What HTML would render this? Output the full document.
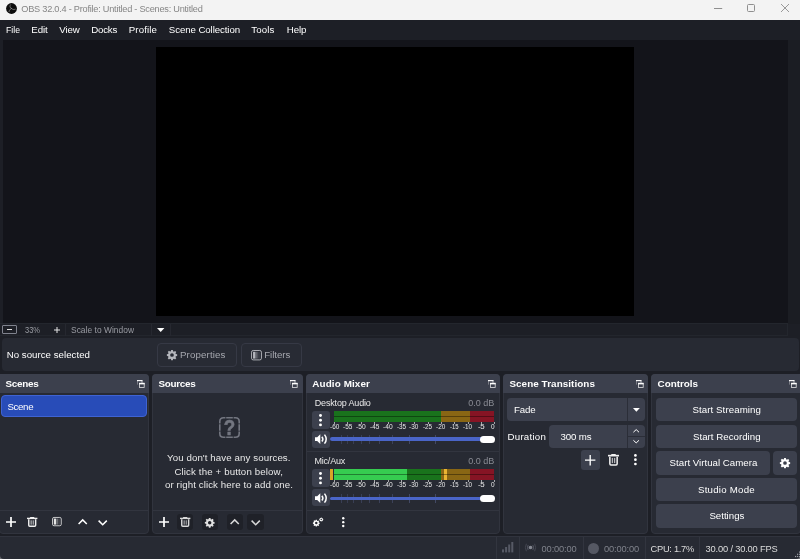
<!DOCTYPE html>
<html><head><meta charset="utf-8"><title>OBS 32.0.4 - Profile: Untitled - Scenes: Untitled</title>
<style>
*{margin:0;padding:0;box-sizing:border-box}
html,body{width:800px;height:559px;overflow:hidden;background:#1d1f26;font-family:"Liberation Sans","DejaVu Sans",sans-serif;}
.a{position:absolute}
.t{position:absolute;white-space:nowrap;color:#fff;font-size:9.7px;line-height:12px}
.dock{position:absolute;background:#272a33;border:1px solid #31343e;border-radius:4px}
.hd{position:absolute;background:#3c404d;height:19px;border-radius:4px 4px 0 0}
.btn{position:absolute;background:#3c404d;border-radius:4px}
.dbtn{position:absolute;background:#1f2128;border-radius:3px}
.ln{position:absolute;background:#32353f;height:1px}
.vl{position:absolute;background:#32353f;width:1px}
svg{position:absolute;overflow:visible}
</style></head><body>
<!-- ===== title bar ===== -->
<div class="a" style="left:0;top:0;width:800px;height:20px;background:#f3f3f3"></div>
<svg style="left:5.5px;top:2.7px" width="11" height="11" viewBox="0 0 22 22"><circle cx="11" cy="11" r="10.8" fill="#0d0d0d"/><g fill="none" stroke="#9a9a9a" stroke-width="1.3" stroke-linecap="round"><path d="M9 3.5C6.5 6.5 8 10 11 11"/><path d="M18.5 12.5C15 14 11.5 12.5 11 11"/><path d="M6 17.5C6.5 13.5 9 11.5 11 11"/></g></svg>
<svg style="left:713.7px;top:7.8px" width="9" height="1"><rect width="8.2" height="1" fill="#8f8f8f"/></svg>
<div class="a" style="left:747px;top:4px;width:8.3px;height:8.3px;border:1px solid #8f8f8f;border-radius:1.5px"></div>
<svg style="left:781px;top:4px" width="8" height="8" viewBox="0 0 8 8"><path d="M0 0L8 8M8 0L0 8" stroke="#8f8f8f" stroke-width="0.9"/></svg>

<!-- ===== preview ===== -->
<div class="a" style="left:0;top:39.5px;width:800px;height:284px;background:#13141a"></div>
<div class="a" style="left:0;top:39.5px;width:2.5px;height:284px;background:#1d1f26"></div>
<div class="a" style="left:787.5px;top:39.5px;width:12.5px;height:284px;background:#1b1d23"></div>
<div class="a" style="left:155.6px;top:46.8px;width:478.6px;height:269.2px;background:#000"></div>

<!-- ===== zoom bar ===== -->
<div class="a" style="left:0;top:323.5px;width:800px;height:15.5px;background:#1d1f26"></div>
<div class="a" style="left:-1px;top:323.3px;width:788.5px;height:12.6px;background:#1d1f26;border:1px solid #23262d"></div>
<div class="a" style="left:1.9px;top:324.8px;width:15px;height:9.2px;border:0.9px solid #80838e;border-radius:1px"></div>
<div class="a" style="left:6.6px;top:328.9px;width:5.6px;height:1.1px;background:#e0e0e0"></div>
<svg style="left:54px;top:327px" width="6" height="6" viewBox="0 0 6 6"><path d="M3 0V6M0 3H6" stroke="#e6e6e6" stroke-width="1"/></svg>
<div class="vl" style="left:65px;top:324px;height:12px;background:#262830"></div>
<div class="vl" style="left:151px;top:324px;height:12px;background:#262830"></div>
<div class="vl" style="left:170px;top:324px;height:12px;background:#262830"></div>
<svg style="left:156.8px;top:328.1px" width="8" height="4" viewBox="0 0 8 4"><path d="M0 0H7.4L3.7 4Z" fill="#fff"/></svg>

<!-- ===== context bar ===== -->
<div class="a" style="left:1.9px;top:338.3px;width:796.9px;height:32.4px;background:#272a33;border-radius:4px"></div>
<div class="a" style="left:157px;top:343px;width:79.5px;height:23.7px;border:1px solid #363945;border-radius:4px;background:#282b34"></div>
<div class="a" style="left:241.4px;top:343px;width:60.3px;height:23.7px;border:1px solid #363945;border-radius:4px;background:#282b34"></div>
<svg class="gear" style="left:167px;top:350px" width="10" height="10" viewBox="0 0 20 20"><use href="#gear" fill="#b4b6bc"/></svg>
<svg style="left:250.7px;top:349.8px" width="11" height="10.4" viewBox="0 0 22 21"><use href="#filt" color="#b4b6bc"/></svg>

<!-- ===== icon defs ===== -->
<svg width="0" height="0" style="left:-10px;top:-10px"><defs>
<path id="gear" fill-rule="evenodd" d="M8.3 0h3.4l.5 2.6 1.7.7 2.2-1.5 2.4 2.4-1.5 2.2.7 1.7 2.6.5v3.4l-2.6.5-.7 1.7 1.5 2.2-2.4 2.4-2.2-1.5-1.7.7-.5 2.6H8.300000000000001l-.5-2.6-1.7-.7-2.2 1.5-2.4-2.4 1.5-2.2-.7-1.7L-.3 11.700000000000001V8.3l2.6-.5.7-1.7L1.5 3.9l2.4-2.4 2.2 1.5 1.7-.7zM10 6.300000000000001a3.7 3.7 0 100 7.4 3.7 3.7 0 000-7.4z"/>
<g id="filt"><rect x="1" y="1" width="20" height="19" rx="3.4" fill="none" stroke="currentColor" stroke-width="1.9"/><rect x="4" y="3.6" width="5" height="13.8" fill="currentColor"/><rect x="9.6" y="3.6" width="3.6" height="13.8" fill="currentColor" opacity=".42"/><rect x="13.2" y="3.6" width="4.6" height="13.8" fill="currentColor" opacity=".14"/></g>
<g id="float"><rect x="0" y="0" width="5.4" height="1.2" fill="#fff" opacity=".95"/><rect x="0" y="0" width="0.8" height="4.6" fill="#fff" opacity=".4"/><rect x="4.6" y="0" width="0.8" height="2.9" fill="#fff" opacity=".8"/><rect x="2" y="2.85" width="5.6" height="1.5" fill="#fff"/><rect x="2.4" y="3.3" width="4.8" height="4.2" fill="none" stroke="#fff" stroke-width="0.8" opacity=".85"/></g>
<g id="plus"><path d="M5 0V10M0 5H10" stroke="#fff" stroke-width="1.7" fill="none"/></g>
<g id="trash"><rect x="0" y="0.7" width="10.4" height="1.4" fill="currentColor"/><rect x="3.1" y="0" width="4.2" height="1.2" fill="currentColor"/><path d="M1.75 2.3V8.3Q1.75 9.3 2.75 9.3H7.65Q8.65 9.3 8.65 8.3V2.3" fill="none" stroke="currentColor" stroke-width="1.45"/><rect x="3.55" y="3.3" width="1.2" height="4.4" fill="currentColor" opacity=".7"/><rect x="5.65" y="3.3" width="1.2" height="4.4" fill="currentColor" opacity=".7"/></g>
<g id="up"><path d="M0.6 5L4.7 0.9L8.8 5" fill="none" stroke="currentColor" stroke-width="1.5"/></g>
<g id="down"><path d="M0.6 0.6L4.7 4.7L8.8 0.6" fill="none" stroke="currentColor" stroke-width="1.5"/></g>
<g id="dots"><circle cx="1.5" cy="1.5" r="1.45" fill="#fff"/><circle cx="1.5" cy="6.2" r="1.45" fill="#fff"/><circle cx="1.5" cy="10.9" r="1.45" fill="#fff"/></g>
<g id="spk"><path d="M0 3.3H2.2L5.3 0.2V10L2.2 6.9H0Z" fill="#fff"/><path d="M6.9 2.7Q8.9 5.1 6.9 7.5" fill="none" stroke="#fff" stroke-width="1.5"/><path d="M9.5 0.6Q13 5.1 9.5 9.6" fill="none" stroke="#fff" stroke-width="1.5"/></g>
</defs></svg>

<!-- ===== Scenes dock ===== -->
<div class="dock" style="left:-1px;top:374px;width:150px;height:159.6px"></div>
<div class="hd" style="left:0;top:374px;width:149px;border-radius:0 4px 0 0"></div>
<svg style="left:136.7px;top:379.9px" width="8" height="8" viewBox="0 0 8 8"><use href="#float"/></svg>
<div class="a" style="left:1px;top:394.6px;width:146px;height:22.6px;background:#284cb8;border:1px solid #3f63d2;border-radius:4px"></div>
<div class="ln" style="left:0;top:510px;width:148px"></div>
<svg style="left:6px;top:517.2px" width="10" height="10" viewBox="0 0 10 10"><use href="#plus"/></svg>
<svg style="left:26.8px;top:516.9px;color:#f0f0f0" width="10.4" height="9.8" viewBox="0 0 10.4 9.8"><use href="#trash"/></svg>
<svg style="left:51.9px;top:517.2px" width="9.8" height="9.2" viewBox="0 0 22 21"><use href="#filt" color="#e4e4e4"/></svg>
<svg style="left:77.6px;top:519.3px;color:#fff" width="9.4" height="5.6" viewBox="0 0 9.4 5.6"><use href="#up"/></svg>
<svg style="left:98px;top:519.6px;color:#fff" width="9.4" height="5.6" viewBox="0 0 9.4 5.6"><use href="#down"/></svg>

<!-- ===== Sources dock ===== -->
<div class="dock" style="left:152px;top:374px;width:151px;height:159.6px"></div>
<div class="hd" style="left:152px;top:374px;width:151px"></div>
<svg style="left:290.2px;top:379.9px" width="8" height="8" viewBox="0 0 8 8"><use href="#float"/></svg>
<svg style="left:218.8px;top:416.9px;will-change:transform" width="21" height="21" viewBox="0 0 21 21"><g fill="none" stroke="#737680" stroke-width="1.6"><path d="M0.8 6.4V4.6Q0.8 0.8 4.6 0.8H6.4"/><path d="M14.6 0.8H16.4Q20.2 0.8 20.2 4.6V6.4"/><path d="M20.2 14.6V16.4Q20.2 20.2 16.4 20.2H14.6"/><path d="M6.4 20.2H4.6Q0.8 20.2 0.8 16.4V14.6"/><path d="M7.2 0.8H13.8M7.2 20.2H13.8M0.8 7.2V13.8M20.2 7.2V13.8"/></g><text transform="translate(10.5,17.7) scale(0.94,1.09)" x="0" y="0" text-anchor="middle" font-family="Liberation Sans, sans-serif" font-weight="bold" font-size="20" fill="#737680" stroke="#737680" stroke-width="0.5">?</text></svg>
<div class="ln" style="left:153px;top:510px;width:149px"></div>
<svg style="left:159.4px;top:517.2px" width="10" height="10" viewBox="0 0 10 10"><use href="#plus"/></svg>
<div class="dbtn" style="left:176.6px;top:514px;width:16.6px;height:16.4px"></div>
<svg style="left:180px;top:517.4px;color:#d8d8d8" width="10.4" height="9.8" viewBox="0 0 10.4 9.8"><use href="#trash"/></svg>
<div class="dbtn" style="left:201.6px;top:514px;width:16.8px;height:16.4px"></div>
<svg style="left:205.3px;top:517.5px" width="9.4" height="9.4" viewBox="0 0 20 20"><use href="#gear" fill="#e0e0e0"/></svg>
<div class="dbtn" style="left:227px;top:514px;width:16.4px;height:16.4px"></div>
<svg style="left:230.4px;top:519.3px;color:#d8d8d8" width="9.4" height="5.6" viewBox="0 0 9.4 5.6"><use href="#up"/></svg>
<div class="dbtn" style="left:247.4px;top:514px;width:16.6px;height:16.4px"></div>
<svg style="left:250.9px;top:519.6px;color:#d8d8d8" width="9.4" height="5.6" viewBox="0 0 9.4 5.6"><use href="#down"/></svg>

<!-- ===== Audio Mixer dock ===== -->
<div class="dock" style="left:306px;top:374px;width:194.2px;height:159.6px"></div>
<div class="hd" style="left:306px;top:374px;width:194.2px"></div>
<svg style="left:487.7px;top:379.9px" width="8" height="8" viewBox="0 0 8 8"><use href="#float"/></svg>
<div class="a" style="left:334.0px;top:410.8px;width:106.9px;height:5.5px;background:#19731c"></div>
<div class="a" style="left:440.9px;top:410.8px;width:29.4px;height:5.5px;background:#896614"></div>
<div class="a" style="left:470.3px;top:410.8px;width:24.1px;height:5.5px;background:#861424"></div>
<div class="a" style="left:334.0px;top:416.3px;width:106.9px;height:5.5px;background:#19731c"></div>
<div class="a" style="left:440.9px;top:416.3px;width:29.4px;height:5.5px;background:#896614"></div>
<div class="a" style="left:470.3px;top:416.3px;width:24.1px;height:5.5px;background:#861424"></div>
<div class="a" style="left:334.0px;top:415.8px;width:160.4px;height:0.9px;background:#000;opacity:.38"></div>
<div class="a" style="left:334.0px;top:469.0px;width:106.9px;height:5.5px;background:#19731c"></div>
<div class="a" style="left:440.9px;top:469.0px;width:29.4px;height:5.5px;background:#896614"></div>
<div class="a" style="left:470.3px;top:469.0px;width:24.1px;height:5.5px;background:#861424"></div>
<div class="a" style="left:334.0px;top:469.0px;width:72.8px;height:5.5px;background:#36cc50"></div>
<div class="a" style="left:443.8px;top:469.0px;width:3.0px;height:5.5px;background:#eab432"></div>
<div class="a" style="left:334.0px;top:474.5px;width:106.9px;height:5.5px;background:#19731c"></div>
<div class="a" style="left:440.9px;top:474.5px;width:29.4px;height:5.5px;background:#896614"></div>
<div class="a" style="left:470.3px;top:474.5px;width:24.1px;height:5.5px;background:#861424"></div>
<div class="a" style="left:334.0px;top:474.5px;width:72.8px;height:5.5px;background:#36cc50"></div>
<div class="a" style="left:443.8px;top:474.5px;width:3.0px;height:5.5px;background:#eab432"></div>
<div class="a" style="left:334.0px;top:474.0px;width:160.4px;height:0.9px;background:#000;opacity:.38"></div>
<div class="a" style="left:330px;top:469.0px;width:3.2px;height:11px;background:#d8a428"></div>
<div class="a" style="left:334.0px;top:421.9px;width:1px;height:2.3px;background:#fff;opacity:.6"></div>
<div class="a" style="left:347.4px;top:421.9px;width:1px;height:2.3px;background:#fff;opacity:.6"></div>
<div class="a" style="left:360.7px;top:421.9px;width:1px;height:2.3px;background:#fff;opacity:.6"></div>
<div class="a" style="left:374.1px;top:421.9px;width:1px;height:2.3px;background:#fff;opacity:.6"></div>
<div class="a" style="left:387.5px;top:421.9px;width:1px;height:2.3px;background:#fff;opacity:.6"></div>
<div class="a" style="left:400.8px;top:421.9px;width:1px;height:2.3px;background:#fff;opacity:.6"></div>
<div class="a" style="left:414.2px;top:421.9px;width:1px;height:2.3px;background:#fff;opacity:.6"></div>
<div class="a" style="left:427.6px;top:421.9px;width:1px;height:2.3px;background:#fff;opacity:.6"></div>
<div class="a" style="left:440.9px;top:421.9px;width:1px;height:2.3px;background:#fff;opacity:.6"></div>
<div class="a" style="left:454.3px;top:421.9px;width:1px;height:2.3px;background:#fff;opacity:.6"></div>
<div class="a" style="left:467.7px;top:421.9px;width:1px;height:2.3px;background:#fff;opacity:.6"></div>
<div class="a" style="left:481.0px;top:421.9px;width:1px;height:2.3px;background:#fff;opacity:.6"></div>
<div class="a" style="left:493.8px;top:421.9px;width:1px;height:2.3px;background:#fff;opacity:.6"></div>
<div class="a" style="left:334.0px;top:480.1px;width:1px;height:2.3px;background:#fff;opacity:.6"></div>
<div class="a" style="left:347.4px;top:480.1px;width:1px;height:2.3px;background:#fff;opacity:.6"></div>
<div class="a" style="left:360.7px;top:480.1px;width:1px;height:2.3px;background:#fff;opacity:.6"></div>
<div class="a" style="left:374.1px;top:480.1px;width:1px;height:2.3px;background:#fff;opacity:.6"></div>
<div class="a" style="left:387.5px;top:480.1px;width:1px;height:2.3px;background:#fff;opacity:.6"></div>
<div class="a" style="left:400.8px;top:480.1px;width:1px;height:2.3px;background:#fff;opacity:.6"></div>
<div class="a" style="left:414.2px;top:480.1px;width:1px;height:2.3px;background:#fff;opacity:.6"></div>
<div class="a" style="left:427.6px;top:480.1px;width:1px;height:2.3px;background:#fff;opacity:.6"></div>
<div class="a" style="left:440.9px;top:480.1px;width:1px;height:2.3px;background:#fff;opacity:.6"></div>
<div class="a" style="left:454.3px;top:480.1px;width:1px;height:2.3px;background:#fff;opacity:.6"></div>
<div class="a" style="left:467.7px;top:480.1px;width:1px;height:2.3px;background:#fff;opacity:.6"></div>
<div class="a" style="left:481.0px;top:480.1px;width:1px;height:2.3px;background:#fff;opacity:.6"></div>
<div class="a" style="left:493.8px;top:480.1px;width:1px;height:2.3px;background:#fff;opacity:.6"></div>
<div class="btn" style="left:312.3px;top:411.4px;width:17.4px;height:17.2px;border-radius:3px"></div>
<svg style="left:319.2px;top:414.1px" width="3" height="12.4" viewBox="0 0 3 12.4"><use href="#dots"/></svg>
<div class="btn" style="left:312.3px;top:430.5px;width:17.4px;height:17.2px;border-radius:3px"></div>
<svg style="left:314.9px;top:434.0px" width="12.4" height="10.2" viewBox="0 0 12.4 10.2"><use href="#spk"/></svg>
<div class="btn" style="left:312.3px;top:469.4px;width:17.4px;height:17.2px;border-radius:3px"></div>
<svg style="left:319.2px;top:472.1px" width="3" height="12.4" viewBox="0 0 3 12.4"><use href="#dots"/></svg>
<div class="btn" style="left:312.3px;top:489.0px;width:17.4px;height:17.2px;border-radius:3px"></div>
<svg style="left:314.9px;top:492.5px" width="12.4" height="10.2" viewBox="0 0 12.4 10.2"><use href="#spk"/></svg>
<div class="a" style="left:340.5px;top:434.7px;width:1px;height:9px;background:#5d6797;opacity:0.35"></div>
<div class="a" style="left:347.0px;top:434.7px;width:1px;height:9px;background:#5d6797;opacity:0.3"></div>
<div class="a" style="left:352.5px;top:434.7px;width:1px;height:9px;background:#5d6797;opacity:0.35"></div>
<div class="a" style="left:360.5px;top:434.7px;width:1px;height:9px;background:#5d6797;opacity:0.35"></div>
<div class="a" style="left:368.5px;top:434.7px;width:1px;height:9px;background:#5d6797;opacity:0.35"></div>
<div class="a" style="left:378.9px;top:434.7px;width:1px;height:9px;background:#5d6797;opacity:0.4"></div>
<div class="a" style="left:392.1px;top:434.7px;width:1px;height:9px;background:#5d6797;opacity:0.4"></div>
<div class="a" style="left:409.2px;top:434.7px;width:1px;height:9px;background:#5d6797;opacity:0.5"></div>
<div class="a" style="left:435.2px;top:434.7px;width:1px;height:9px;background:#5d6797;opacity:0.5"></div>
<div class="a" style="left:330.4px;top:437.4px;width:160px;height:3.6px;background:#4a65c8;border-radius:2px"></div>
<div class="a" style="left:479.7px;top:435.5px;width:15px;height:7.4px;background:#fff;border-radius:3.5px"></div>
<div class="a" style="left:340.5px;top:493.8px;width:1px;height:9px;background:#5d6797;opacity:0.35"></div>
<div class="a" style="left:347.0px;top:493.8px;width:1px;height:9px;background:#5d6797;opacity:0.3"></div>
<div class="a" style="left:352.5px;top:493.8px;width:1px;height:9px;background:#5d6797;opacity:0.35"></div>
<div class="a" style="left:360.5px;top:493.8px;width:1px;height:9px;background:#5d6797;opacity:0.35"></div>
<div class="a" style="left:368.5px;top:493.8px;width:1px;height:9px;background:#5d6797;opacity:0.35"></div>
<div class="a" style="left:378.9px;top:493.8px;width:1px;height:9px;background:#5d6797;opacity:0.4"></div>
<div class="a" style="left:392.1px;top:493.8px;width:1px;height:9px;background:#5d6797;opacity:0.4"></div>
<div class="a" style="left:409.2px;top:493.8px;width:1px;height:9px;background:#5d6797;opacity:0.5"></div>
<div class="a" style="left:435.2px;top:493.8px;width:1px;height:9px;background:#5d6797;opacity:0.5"></div>
<div class="a" style="left:330.4px;top:496.5px;width:160px;height:3.6px;background:#4a65c8;border-radius:2px"></div>
<div class="a" style="left:479.7px;top:494.6px;width:15px;height:7.4px;background:#fff;border-radius:3.5px"></div>
<div class="ln" style="left:307px;top:451px;width:192px"></div>
<div class="ln" style="left:307px;top:509.6px;width:192px"></div>
<svg style="left:312.8px;top:517.4px" width="10.4" height="9.4" viewBox="0 0 20.8 18.8"><g transform="translate(0,5.6) scale(0.66)"><use href="#gear" fill="#fff"/></g><g transform="translate(12.6,1.2) scale(0.39)"><use href="#gear" fill="#fff"/></g></svg>
<svg style="left:341.75px;top:516.85px" width="2.5" height="10.3" viewBox="0 0 3 12.4" preserveAspectRatio="none"><use href="#dots"/></svg>

<!-- ===== Scene Transitions dock ===== -->
<div class="dock" style="left:503.3px;top:374px;width:144.9px;height:159.6px"></div>
<div class="hd" style="left:503.3px;top:374px;width:144.9px"></div>
<svg style="left:635.8px;top:379.9px" width="8" height="8" viewBox="0 0 8 8"><use href="#float"/></svg>
<div class="btn" style="left:507px;top:398px;width:138px;height:23.2px"></div>
<div class="vl" style="left:627.2px;top:398px;height:23.2px;background:#2b2e38"></div>
<svg style="left:632.8px;top:408px" width="7" height="3.8" viewBox="0 0 7 3.8"><path d="M0 0H6.8L3.4 3.7Z" fill="#fff"/></svg>
<div class="btn" style="left:549px;top:424.5px;width:96px;height:23.6px"></div>
<div class="vl" style="left:627.2px;top:424.5px;height:23.6px;background:#2b2e38"></div>
<div class="ln" style="left:628px;top:436px;width:17px;background:#2b2e38"></div>
<svg style="left:632.8px;top:429px;color:#fff" width="6.4" height="3.4" viewBox="0 0 6.4 3.4"><path d="M0.4 3.2L3.2 0.6L6 3.2" fill="none" stroke="#fff" stroke-width="1"/></svg>
<svg style="left:632.8px;top:440.4px;color:#fff" width="6.4" height="3.4" viewBox="0 0 6.4 3.4"><path d="M0.4 0.3L3.2 2.9L6 0.3" fill="none" stroke="#fff" stroke-width="1"/></svg>
<div class="btn" style="left:581px;top:449.8px;width:19px;height:20.2px;border-radius:3px"></div>
<svg style="left:585.2px;top:454.8px" width="10.4" height="10.4" viewBox="0 0 10 10"><path d="M5 0V10M0 5H10" stroke="#fff" stroke-width="1.3" fill="none"/></svg>
<svg style="left:608px;top:453.8px;color:#f0f0f0" width="11" height="11.6" viewBox="0 0 10.4 9.8" preserveAspectRatio="none"><use href="#trash"/></svg>
<svg style="left:634px;top:454.4px" width="2.8" height="11.4" viewBox="0 0 3 12.4" preserveAspectRatio="none"><use href="#dots"/></svg>

<!-- ===== Controls dock ===== -->
<div class="dock" style="left:651.3px;top:374px;width:150px;height:159.6px"></div>
<div class="hd" style="left:651.3px;top:374px;width:149px;border-radius:4px 0 0 0"></div>
<svg style="left:789.3px;top:379.9px" width="8" height="8" viewBox="0 0 8 8"><use href="#float"/></svg>
<div class="btn" style="left:656px;top:398px;width:141px;height:23.2px"></div>
<div class="btn" style="left:656px;top:424.5px;width:141px;height:23.6px"></div>
<div class="btn" style="left:656px;top:451px;width:114.4px;height:23.5px"></div>
<div class="btn" style="left:773px;top:451px;width:24px;height:23.5px"></div>
<svg style="left:780px;top:458px" width="10" height="10" viewBox="0 0 20 20"><use href="#gear" fill="#fff"/></svg>
<div class="btn" style="left:656px;top:477.6px;width:141px;height:23.5px"></div>
<div class="btn" style="left:656px;top:504px;width:141px;height:23.6px"></div>

<!-- ===== status bar ===== -->
<div class="a" style="left:0;top:554px;width:5px;height:5px;background:#6b6d72"></div>
<div class="a" style="left:795px;top:554px;width:5px;height:5px;background:#6b6d72"></div>
<div class="a" style="left:0;top:536.3px;width:800px;height:22.7px;background:#272a33;border-top:1px solid #30333d;border-radius:0 0 4px 4px"></div>
<div class="vl" style="left:496px;top:537px;height:22px"></div>
<div class="vl" style="left:519px;top:537px;height:22px"></div>
<div class="vl" style="left:582.6px;top:537px;height:22px"></div>
<div class="vl" style="left:644.8px;top:537px;height:22px"></div>
<div class="vl" style="left:699px;top:537px;height:22px"></div>
<svg style="left:501.8px;top:542.3px" width="11.4" height="10.4" viewBox="0 0 11.4 10.4"><g fill="#565965"><rect x="0" y="7.4" width="2" height="3"/><rect x="3.1" y="5" width="2" height="5.4"/><rect x="6.2" y="2.5" width="2" height="7.9"/><rect x="9.3" y="0" width="2" height="10.4"/></g></svg>
<svg style="left:525.1px;top:543.1px" width="11" height="9" viewBox="0 0 11 9"><circle cx="5.5" cy="4.5" r="1.8" fill="#868993"/><g fill="none" stroke="#5a5d69" stroke-width="1"><path d="M3.1 2.2Q1.9 4.5 3.1 6.8"/><path d="M7.9 2.2Q9.1 4.5 7.9 6.8"/></g><g fill="none" stroke="#474a55" stroke-width="0.9"><path d="M1.4 0.8Q-0.6 4.5 1.4 8.2"/><path d="M9.6 0.8Q11.6 4.5 9.6 8.2"/></g></svg>

<div class="a" style="left:588px;top:542.5px;width:11px;height:11px;border-radius:50%;background:#555863"></div>
<svg style="left:793.6px;top:551px" width="7" height="8" viewBox="0 0 7 8"><g fill="#9a9ca3"><rect x="5" y="0.5" width="1.2" height="1.2"/><rect x="3" y="2.700000000000001" width="1.2" height="1.2"/><rect x="5" y="2.700000000000001" width="1.2" height="1.2"/><rect x="1" y="4.9" width="1.2" height="1.2"/><rect x="3" y="4.9" width="1.2" height="1.2"/><rect x="5" y="4.9" width="1.2" height="1.2"/></g></svg>

<!-- ===== texts ===== -->
<div class="a" style="left:0;top:0;width:800px;height:559px;will-change:transform">
<div class="t" style="left:21.30px;top:2.61px;font-size:9.2px;color:#858585;letter-spacing:-0.241px;">OBS 32.0.4 - Profile: Untitled - Scenes: Untitled</div>
<div class="t" style="left:5.50px;top:23.64px;font-size:9.7px;color:#fff;transform:scaleX(0.896);transform-origin:0 0;">File</div>
<div class="t" style="left:31.30px;top:23.64px;font-size:9.7px;color:#fff;letter-spacing:-0.126px;">Edit</div>
<div class="t" style="left:59.30px;top:23.64px;font-size:9.7px;color:#fff;letter-spacing:-0.157px;">View</div>
<div class="t" style="left:91.30px;top:23.64px;font-size:9.7px;color:#fff;letter-spacing:-0.244px;">Docks</div>
<div class="t" style="left:128.80px;top:23.64px;font-size:9.7px;color:#fff;letter-spacing:0.104px;">Profile</div>
<div class="t" style="left:168.80px;top:23.64px;font-size:9.7px;color:#fff;letter-spacing:-0.094px;">Scene Collection</div>
<div class="t" style="left:251.30px;top:23.64px;font-size:9.7px;color:#fff;letter-spacing:0.115px;">Tools</div>
<div class="t" style="left:286.80px;top:23.64px;font-size:9.7px;color:#fff;letter-spacing:-0.109px;">Help</div>
<div class="t" style="left:25.00px;top:324.29px;font-size:8.4px;color:#9a9ca3;transform:scaleX(0.895);transform-origin:0 0;">33%</div>
<div class="t" style="left:71.00px;top:324.29px;font-size:8.4px;color:#9a9ca3;letter-spacing:0.042px;">Scale to Window</div>
<div class="t" style="left:6.70px;top:349.24px;font-size:9.7px;color:#fff;letter-spacing:0.020px;">No source selected</div>
<div class="t" style="left:180.00px;top:349.14px;font-size:9.7px;color:#a6a8af;letter-spacing:0.134px;">Properties</div>
<div class="t" style="left:264.20px;top:349.14px;font-size:9.7px;color:#a6a8af;letter-spacing:-0.039px;">Filters</div>
<div class="t" style="left:5.40px;top:377.97px;font-size:9.9px;color:#fff;letter-spacing:-0.266px;font-weight:bold;">Scenes</div>
<div class="t" style="left:158.40px;top:377.97px;font-size:9.9px;color:#fff;letter-spacing:-0.255px;font-weight:bold;">Sources</div>
<div class="t" style="left:312.30px;top:377.97px;font-size:9.9px;color:#fff;letter-spacing:0.108px;font-weight:bold;">Audio Mixer</div>
<div class="t" style="left:509.40px;top:377.97px;font-size:9.9px;color:#fff;letter-spacing:0.064px;font-weight:bold;">Scene Transitions</div>
<div class="t" style="left:657.60px;top:377.97px;font-size:9.9px;color:#fff;letter-spacing:-0.026px;font-weight:bold;">Controls</div>
<div class="t" style="left:7.40px;top:400.64px;font-size:9.7px;color:#fff;letter-spacing:-0.334px;">Scene</div>
<div class="t" style="left:167.00px;top:452.04px;font-size:9.7px;color:#e8e8e8;letter-spacing:0.094px;">You don't have any sources.</div>
<div class="t" style="left:174.40px;top:465.64px;font-size:9.7px;color:#e8e8e8;letter-spacing:0.133px;">Click the + button below,</div>
<div class="t" style="left:165.00px;top:479.04px;font-size:9.7px;color:#e8e8e8;letter-spacing:0.099px;">or right click here to add one.</div>
<div class="t" style="left:314.70px;top:396.88px;font-size:9.0px;color:#e8e8e8;letter-spacing:-0.157px;">Desktop Audio</div>
<div class="t" style="left:468.30px;top:396.88px;font-size:9.0px;color:#8a8c94;letter-spacing:-0.005px;">0.0 dB</div>
<div class="t" style="left:314.50px;top:455.08px;font-size:9.0px;color:#e8e8e8;letter-spacing:-0.217px;">Mic/Aux</div>
<div class="t" style="left:468.30px;top:455.08px;font-size:9.0px;color:#8a8c94;letter-spacing:-0.005px;">0.0 dB</div>
<div class="t" style="left:514.00px;top:403.64px;font-size:9.7px;color:#fff;letter-spacing:-0.123px;">Fade</div>
<div class="t" style="left:507.60px;top:430.64px;font-size:9.7px;color:#fff;letter-spacing:0.222px;">Duration</div>
<div class="t" style="left:560.40px;top:430.64px;font-size:9.7px;color:#fff;letter-spacing:-0.097px;">300 ms</div>
<div class="t" style="left:692.40px;top:403.64px;font-size:9.7px;color:#fff;letter-spacing:0.086px;">Start Streaming</div>
<div class="t" style="left:693.00px;top:430.64px;font-size:9.7px;color:#fff;letter-spacing:0.019px;">Start Recording</div>
<div class="t" style="left:669.60px;top:457.04px;font-size:9.7px;color:#fff;letter-spacing:0.010px;">Start Virtual Camera</div>
<div class="t" style="left:698.00px;top:483.64px;font-size:9.7px;color:#fff;letter-spacing:0.236px;">Studio Mode</div>
<div class="t" style="left:709.40px;top:510.24px;font-size:9.7px;color:#fff;">Settings</div>
<div class="t" style="left:541.60px;top:542.78px;font-size:9.3px;color:#7f828b;letter-spacing:-0.150px;">00:00:00</div>
<div class="t" style="left:604.00px;top:542.78px;font-size:9.3px;color:#7f828b;letter-spacing:-0.150px;">00:00:00</div>
<div class="t" style="left:650.60px;top:542.78px;font-size:9.3px;color:#dcdcdc;letter-spacing:-0.289px;">CPU: 1.7%</div>
<div class="t" style="left:705.60px;top:542.78px;font-size:9.3px;color:#dcdcdc;letter-spacing:-0.174px;">30.00 / 30.00 FPS</div>
<div class="t" style="left:330.40px;top:420.96px;font-size:7.9px;color:#e8e8e8;transform:scaleX(0.815);transform-origin:0 0;">-60</div>
<div class="t" style="left:343.30px;top:420.96px;font-size:7.9px;color:#e8e8e8;transform:scaleX(0.815);transform-origin:0 0;">-55</div>
<div class="t" style="left:356.10px;top:420.96px;font-size:7.9px;color:#e8e8e8;transform:scaleX(0.842);transform-origin:0 0;">-50</div>
<div class="t" style="left:369.70px;top:420.96px;font-size:7.9px;color:#e8e8e8;transform:scaleX(0.815);transform-origin:0 0;">-45</div>
<div class="t" style="left:383.00px;top:420.96px;font-size:7.9px;color:#e8e8e8;transform:scaleX(0.842);transform-origin:0 0;">-40</div>
<div class="t" style="left:396.90px;top:420.96px;font-size:7.9px;color:#e8e8e8;transform:scaleX(0.798);transform-origin:0 0;">-35</div>
<div class="t" style="left:409.30px;top:420.96px;font-size:7.9px;color:#e8e8e8;transform:scaleX(0.815);transform-origin:0 0;">-30</div>
<div class="t" style="left:422.90px;top:420.96px;font-size:7.9px;color:#e8e8e8;transform:scaleX(0.798);transform-origin:0 0;">-25</div>
<div class="t" style="left:436.40px;top:420.96px;font-size:7.9px;color:#e8e8e8;transform:scaleX(0.815);transform-origin:0 0;">-20</div>
<div class="t" style="left:450.00px;top:420.96px;font-size:7.9px;color:#e8e8e8;transform:scaleX(0.754);transform-origin:0 0;">-15</div>
<div class="t" style="left:462.90px;top:420.96px;font-size:7.9px;color:#e8e8e8;transform:scaleX(0.798);transform-origin:0 0;">-10</div>
<div class="t" style="left:477.90px;top:420.96px;font-size:7.9px;color:#e8e8e8;letter-spacing:-0.316px;">-5</div>
<div class="t" style="left:490.70px;top:420.96px;font-size:7.9px;color:#e8e8e8;transform:scaleX(0.820);transform-origin:0 0;">0</div>
<div class="t" style="left:330.40px;top:479.26px;font-size:7.9px;color:#e8e8e8;transform:scaleX(0.815);transform-origin:0 0;">-60</div>
<div class="t" style="left:343.30px;top:479.26px;font-size:7.9px;color:#e8e8e8;transform:scaleX(0.815);transform-origin:0 0;">-55</div>
<div class="t" style="left:356.10px;top:479.26px;font-size:7.9px;color:#e8e8e8;transform:scaleX(0.842);transform-origin:0 0;">-50</div>
<div class="t" style="left:369.70px;top:479.26px;font-size:7.9px;color:#e8e8e8;transform:scaleX(0.815);transform-origin:0 0;">-45</div>
<div class="t" style="left:383.00px;top:479.26px;font-size:7.9px;color:#e8e8e8;transform:scaleX(0.842);transform-origin:0 0;">-40</div>
<div class="t" style="left:396.90px;top:479.26px;font-size:7.9px;color:#e8e8e8;transform:scaleX(0.798);transform-origin:0 0;">-35</div>
<div class="t" style="left:409.30px;top:479.26px;font-size:7.9px;color:#e8e8e8;transform:scaleX(0.815);transform-origin:0 0;">-30</div>
<div class="t" style="left:422.90px;top:479.26px;font-size:7.9px;color:#e8e8e8;transform:scaleX(0.798);transform-origin:0 0;">-25</div>
<div class="t" style="left:436.40px;top:479.26px;font-size:7.9px;color:#e8e8e8;transform:scaleX(0.815);transform-origin:0 0;">-20</div>
<div class="t" style="left:450.00px;top:479.26px;font-size:7.9px;color:#e8e8e8;transform:scaleX(0.754);transform-origin:0 0;">-15</div>
<div class="t" style="left:462.90px;top:479.26px;font-size:7.9px;color:#e8e8e8;transform:scaleX(0.798);transform-origin:0 0;">-10</div>
<div class="t" style="left:477.90px;top:479.26px;font-size:7.9px;color:#e8e8e8;letter-spacing:-0.316px;">-5</div>
<div class="t" style="left:490.70px;top:479.26px;font-size:7.9px;color:#e8e8e8;transform:scaleX(0.820);transform-origin:0 0;">0</div>
</div>
</body></html>
